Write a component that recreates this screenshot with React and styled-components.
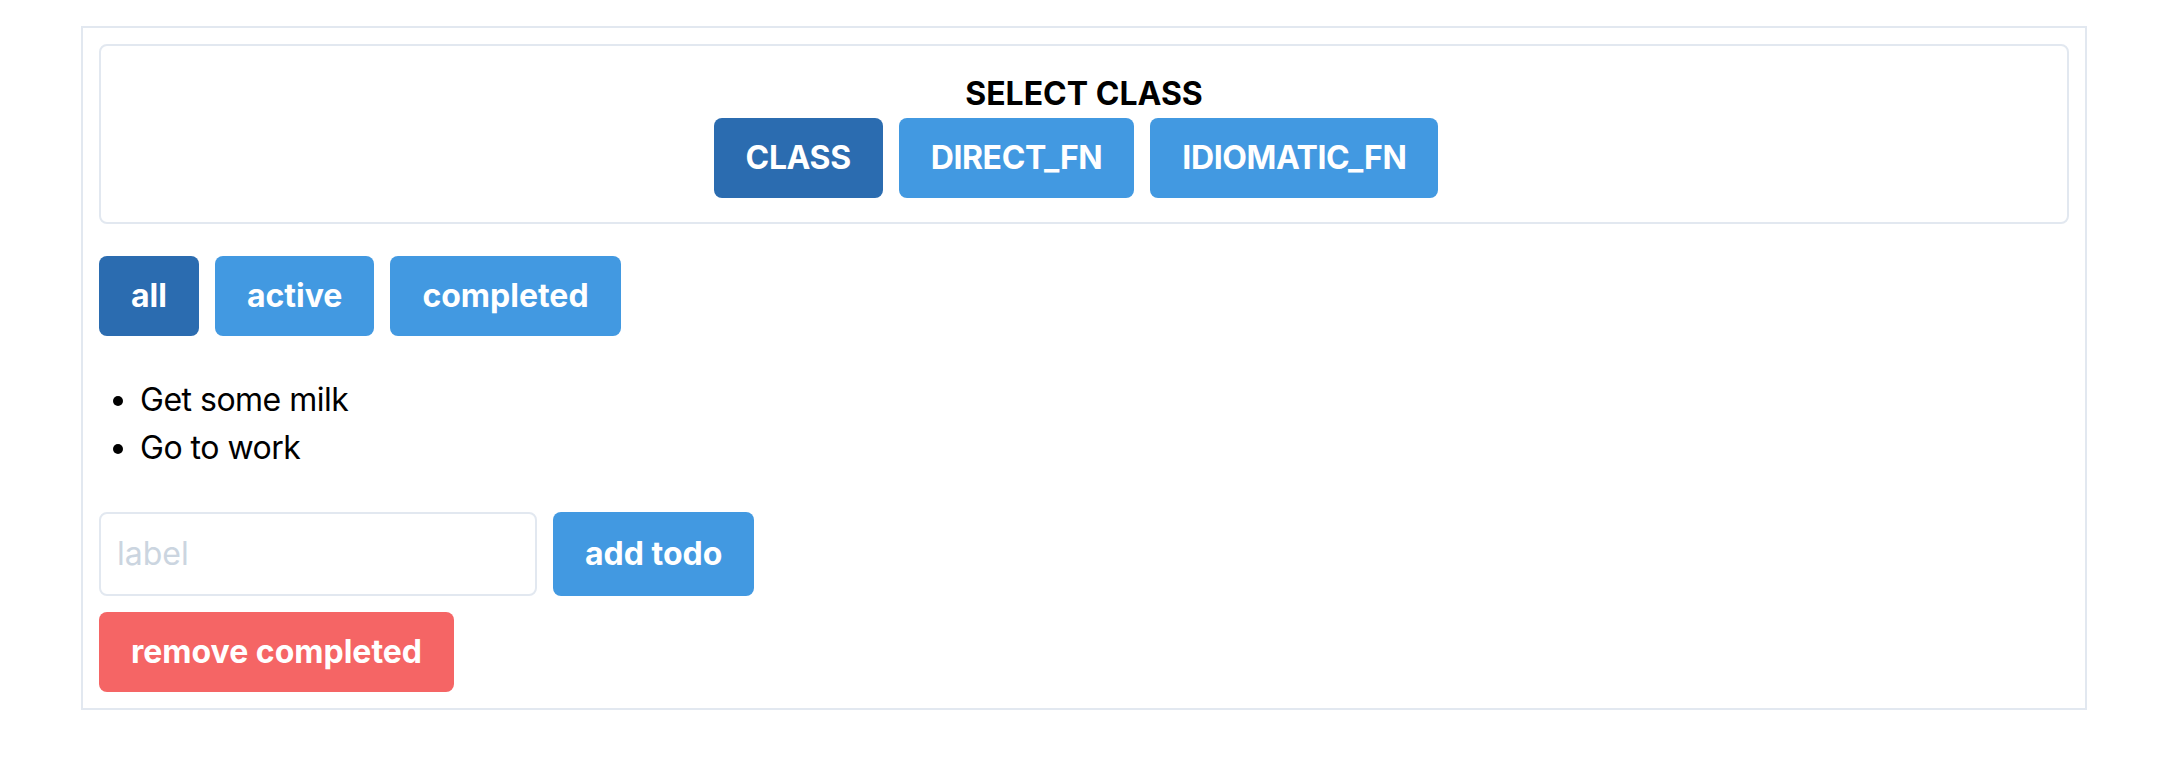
import { useState } from "react";
import styled, { createGlobalStyle } from "styled-components";

const GlobalStyle = createGlobalStyle`
  html, body {
    margin: 0;
    padding: 0;
    background: #fff;
  }
  body {
    font-family: Inter, "Noto Sans", sans-serif;
    font-size: 32px;
    line-height: 1.5;
    color: #000;
  }
  *, *::before, *::after {
    box-sizing: border-box;
  }
`;

const Container = styled.div`
  width: 2006px;
  margin: 26px 0 0 81px;
  padding: 16px;
  border: 2px solid #e2e8f0;
`;

const ClassPanel = styled.div`
  display: flex;
  flex-direction: column;
  align-items: center;
  padding: 24px;
  border: 2px solid #e2e8f0;
  border-radius: 8px;
`;

const Title = styled.div`
  font-weight: 700;
  line-height: 48px;
`;

const ButtonRow = styled.div`
  display: flex;
  justify-content: ${(props) => (props.center ? "center" : "flex-start")};
  margin-top: ${(props) => props.mt || 0}px;
`;

const Button = styled.button`
  font-family: inherit;
  font-size: 32px;
  font-weight: 700;
  line-height: 48px;
  letter-spacing: ${(props) => (props.caps ? "-0.4px" : "0")};
  color: #fff;
  background: ${(props) =>
    props.danger ? "#f56565" : props.active ? "#2b6cb0" : "#4299e1"};
  border: none;
  border-radius: 8px;
  padding: 16px 32px;
  margin-right: 16px;
  cursor: pointer;
`;

const TodoList = styled.ul`
  margin: 40px 0;
  padding-left: 41px;
  list-style: disc;
`;

const TodoItem = styled.li`
  line-height: 48px;
  letter-spacing: -0.5px;
  text-decoration: ${(props) => (props.done ? "line-through" : "none")};
`;

const AddRow = styled.div`
  display: flex;
  align-items: stretch;
`;

const LabelInput = styled.input`
  width: 438px;
  font-family: inherit;
  font-size: 32px;
  line-height: 48px;
  padding: 16px 16px;
  border: 2px solid #e2e8f0;
  border-radius: 8px;
  margin-right: 16px;
  outline: none;
  &::placeholder {
    color: #cbd5e0;
  }
`;

const RemoveRow = styled.div`
  display: flex;
  margin-top: 16px;
`;

const classes = ["CLASS", "DIRECT_FN", "IDIOMATIC_FN"];
const filters = ["all", "active", "completed"];

export default function App() {
  const [selected, setSelected] = useState("CLASS");
  const [filter, setFilter] = useState("all");
  const [label, setLabel] = useState("");
  const [todos, setTodos] = useState([
    { id: 1, label: "Get some milk", done: false },
    { id: 2, label: "Go to work", done: false },
  ]);

  const visible = todos.filter((t) =>
    filter === "all" ? true : filter === "active" ? !t.done : t.done
  );

  const addTodo = () => {
    if (!label.trim()) return;
    setTodos([...todos, { id: Date.now(), label, done: false }]);
    setLabel("");
  };

  const toggle = (id) =>
    setTodos(todos.map((t) => (t.id === id ? { ...t, done: !t.done } : t)));

  return (
    <>
      <GlobalStyle />
      <Container>
        <ClassPanel>
          <Title>SELECT CLASS</Title>
          <ButtonRow center>
            {classes.map((c) => (
              <Button
                key={c}
                caps
                active={selected === c}
                onClick={() => setSelected(c)}
              >
                {c}
              </Button>
            ))}
          </ButtonRow>
        </ClassPanel>
        <ButtonRow mt={32}>
          {filters.map((f) => (
            <Button key={f} active={filter === f} onClick={() => setFilter(f)}>
              {f}
            </Button>
          ))}
        </ButtonRow>
        <TodoList>
          {visible.map((t) => (
            <TodoItem key={t.id} done={t.done} onClick={() => toggle(t.id)}>
              {t.label}
            </TodoItem>
          ))}
        </TodoList>
        <AddRow>
          <LabelInput
            placeholder="label"
            value={label}
            onChange={(e) => setLabel(e.target.value)}
          />
          <Button onClick={addTodo}>add todo</Button>
        </AddRow>
        <RemoveRow>
          <Button danger onClick={() => setTodos(todos.filter((t) => !t.done))}>
            remove completed
          </Button>
        </RemoveRow>
      </Container>
    </>
  );
}
